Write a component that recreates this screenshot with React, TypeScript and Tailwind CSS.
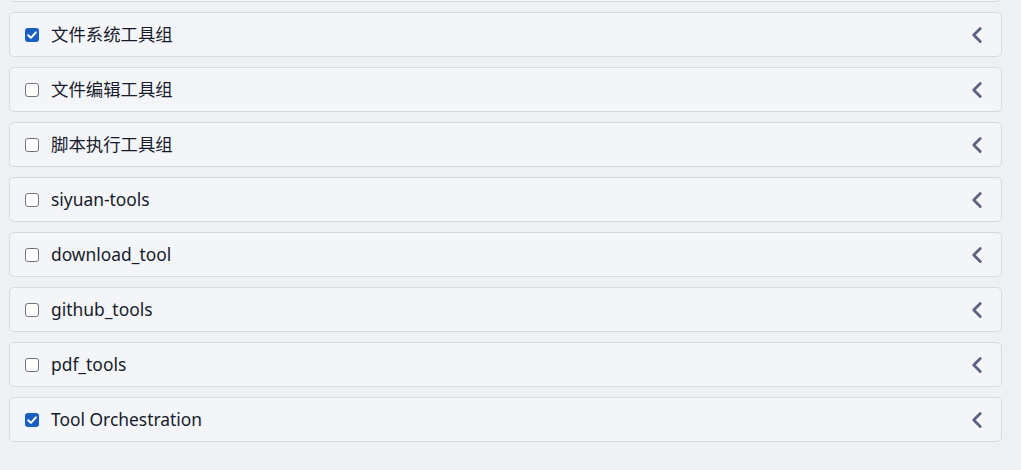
import React from "react"
import { ChevronLeft } from "lucide-react"

const groups = [
  { name: "文件系统工具组", checked: true },
  { name: "文件编辑工具组", checked: false },
  { name: "脚本执行工具组", checked: false },
  { name: "siyuan-tools", checked: false },
  { name: "download_tool", checked: false },
  { name: "github_tools", checked: false },
  { name: "pdf_tools", checked: false },
  { name: "Tool Orchestration", checked: true },
]

function Box({ checked }: { checked: boolean }) {
  if (checked) {
    return (
      <span className="flex h-[14px] w-[14px] items-center justify-center rounded-[3px] bg-[#1a5fc0]">
        <svg viewBox="0 0 14 14" className="h-[14px] w-[14px]">
          <path d="M3.2 7.3 L5.9 9.9 L10.9 4.4" fill="none" stroke="#fff" strokeWidth="2" strokeLinecap="round" strokeLinejoin="round" />
        </svg>
      </span>
    )
  }
  return <span className="block h-[14px] w-[14px] rounded-[3px] border border-[#70747c] bg-white" />
}

function Row({ name, checked }: { name: string; checked: boolean }) {
  return (
    <div className="flex h-[45px] items-center rounded-[5px] border border-[#d6d9e0] bg-[#f4f5f9] pl-[15px] pr-[11px]">
      <Box checked={checked} />
      <span className="ml-[12px] text-[17.4px] text-[#161b2b]">{name}</span>
      <ChevronLeft className="ml-auto h-[26px] w-[26px] text-[#5b6480]" strokeWidth={2.6} />
    </div>
  )
}

export default function App() {
  return (
    <div
      className="h-[470px] w-[1021px] overflow-hidden bg-[#eef0f4]"
      style={{ fontFamily: '"Noto Sans", "Noto Sans CJK SC", sans-serif' }}
    >
      <div className="-mt-[43px] ml-[9px] flex w-[993px] flex-col gap-[10px]">
        <div className="h-[45px] rounded-[5px] border border-[#d6d9e0] bg-[#f4f5f9]" />
        {groups.map((g) => (
          <Row key={g.name} name={g.name} checked={g.checked} />
        ))}
      </div>
    </div>
  )
}
